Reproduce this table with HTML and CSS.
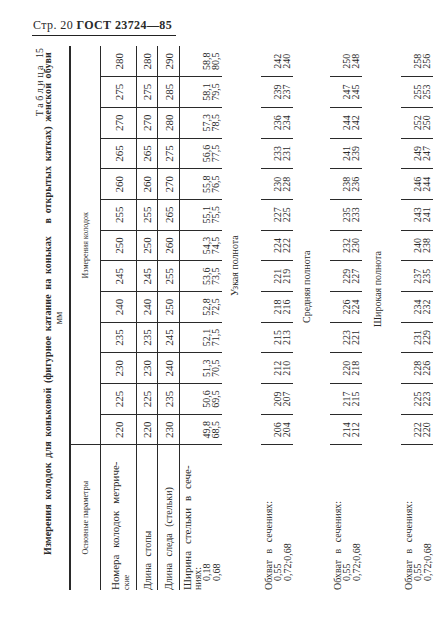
FILE: index.html
```html
<!DOCTYPE html>
<html lang="ru">
<head>
<meta charset="utf-8">
<title>ГОСТ 23724—85, стр. 20</title>
<link rel="stylesheet" href="styles.css">
</head>
<body>
<header class="runhead"><span class="runhead-text">Стр. 20 <b class="doc">ГОСТ 23724—85</b></span></header>
<main class="frame">
  <section class="sheet">
    <div class="tnum">Т а б л и ц а&nbsp;&nbsp;&nbsp;15</div>
    <div class="title">Измерения колодок для коньковой (фигурное катание на коньках <span class="gap"></span>в открытых катках) женской обуви</div>
    <div class="unit">мм</div>
    <table class="grid">
      <colgroup><col class="c-param"><col><col><col><col><col><col><col><col><col><col><col><col><col></colgroup>
      <thead>
        <tr class="hd"><th class="p">Основные параметры</th><th colspan="13">Измерения колодок</th></tr>
      </thead>
      <tbody>
        <tr class="r1"><td class="p"><span class="big">Номера колодок метриче-</span><br><span class="small">ские</span></td><td>220</td><td>225</td><td>230</td><td>235</td><td>240</td><td>245</td><td>250</td><td>255</td><td>260</td><td>265</td><td>270</td><td>275</td><td>280</td></tr>
        <tr class="r2"><td class="p">Длина стопы</td><td>220</td><td>225</td><td>230</td><td>235</td><td>240</td><td>245</td><td>250</td><td>255</td><td>260</td><td>265</td><td>270</td><td>275</td><td>280</td></tr>
        <tr class="r3"><td class="p">Длина следа (стельки)</td><td>230</td><td>235</td><td>240</td><td>245</td><td>250</td><td>255</td><td>260</td><td>265</td><td>270</td><td>275</td><td>280</td><td>285</td><td>290</td></tr>
        <tr class="r4"><td class="p"><span class="big">Ширина стельки в сече-</span><br>ниях:<br><span class="ind">0,18</span><br><span class="ind">0,68</span></td><td>49,8<br>68,5</td><td>50,6<br>69,5</td><td>51,3<br>70,5</td><td>52,1<br>71,5</td><td>52,8<br>72,5</td><td>53,6<br>73,5</td><td>54,3<br>74,5</td><td>55,1<br>75,5</td><td>55,8<br>76,5</td><td>56,6<br>77,5</td><td>57,3<br>78,5</td><td>58,1<br>79,5</td><td>58,8<br>80,5</td></tr>
        <tr class="sub s1"><td class="p"></td><td colspan="13">Узкая полнота</td></tr>
        <tr class="grp"><td class="p">Обхват в сечениях:<br><span class="ind">0,55</span><br><span class="ind">0,72;0,68</span></td><td>206<br>204</td><td>209<br>207</td><td>212<br>210</td><td>215<br>213</td><td>218<br>216</td><td>221<br>219</td><td>224<br>222</td><td>227<br>225</td><td>230<br>228</td><td>233<br>231</td><td>236<br>234</td><td>239<br>237</td><td>242<br>240</td></tr>
        <tr class="sub s2"><td class="p"></td><td colspan="13">Средняя полнота</td></tr>
        <tr class="grp"><td class="p">Обхват в сечениях:<br><span class="ind">0,55</span><br><span class="ind">0,72;0,68</span></td><td>214<br>212</td><td>217<br>215</td><td>220<br>218</td><td>223<br>221</td><td>226<br>224</td><td>229<br>227</td><td>232<br>230</td><td>235<br>233</td><td>238<br>236</td><td>241<br>239</td><td>244<br>242</td><td>247<br>245</td><td>250<br>248</td></tr>
        <tr class="sub s3"><td class="p"></td><td colspan="13">Широкая полнота</td></tr>
        <tr class="grp"><td class="p">Обхват в сечениях:<br><span class="ind">0,55</span><br><span class="ind">0,72;0,68</span></td><td>222<br>220</td><td>225<br>223</td><td>228<br>226</td><td>231<br>229</td><td>234<br>232</td><td>237<br>235</td><td>240<br>238</td><td>243<br>241</td><td>246<br>244</td><td>249<br>247</td><td>252<br>250</td><td>255<br>253</td><td>258<br>256</td></tr>
      </tbody>
    </table>
  </section>
</main>
</body>
</html>
```

FILE: styles.css
```css
html, body {
  margin: 0;
  padding: 0;
  background: #fff;
}
body {
  width: 440px;
  height: 623px;
  overflow: hidden;
  font-family: "Liberation Serif", "DejaVu Serif", serif;
  color: #2a2a2a;
}
.runhead {
  height: 35px;
  box-sizing: border-box;
  padding: 15px 0 0 32px;
}
.runhead-text {
  display: inline-block;
  font-size: 12px;
  line-height: 12px;
  letter-spacing: 0.4px;
  padding: 0 4px 4px 1px;
  border-bottom: 1.5px solid #222;
}
.doc {
  font-weight: bold;
}
.frame {
  display: block;
  width: 440px;
  height: 588px;
  overflow: hidden;
}
.sheet {
  display: block;
  width: 588px;
  height: 440px;
  box-sizing: border-box;
  padding: 36px 11px 0 33px;
  transform-origin: 0 0;
  transform: translateY(588px) rotate(-90deg);
}
.tnum {
  font-size: 10px;
  line-height: 8px;
  text-align: right;
  padding-right: 2px;
}
.title {
  font-size: 10px;
  line-height: 8px;
  font-weight: bold;
  letter-spacing: 0.1px;
  word-spacing: 2px;
  padding-left: 35px;
  white-space: nowrap;
}
.gap {
  display: inline-block;
  width: 8px;
}
.unit {
  font-size: 10px;
  line-height: 9px;
  text-align: center;
  margin-top: 2px;
  height: 15px;
}
.grid {
  border-collapse: collapse;
  table-layout: fixed;
  width: 544px;
}
.c-param {
  width: 145px;
}
.grid th, .grid td {
  padding: 0;
  text-align: center;
  font-weight: normal;
  border-color: #2a2a2a;
}
.hd th {
  border-top: 2px solid #2a2a2a;
  border-bottom: 1px solid #2a2a2a;
  height: 29px;
  font-size: 8px;
  line-height: 9px;
}
.hd th.p {
  border-right: 1px solid #2a2a2a;
}
.grid td.p {
  text-align: left;
  font-size: 10px;
  line-height: 9px;
  word-spacing: 4px;
}
.big {
  font-size: 11px;
}
.small {
  font-size: 8px;
}
.ind {
  padding-left: 9px;
}
.r1 td, .r2 td, .r3 td {
  border-bottom: 1px solid #2a2a2a;
  font-size: 11px;
}
.r1 td:not(.p), .r2 td:not(.p), .r3 td:not(.p), .r4 td:not(.p), .grp td:not(.p) {
  border-left: 1px solid #2a2a2a;
}
.r1 td { height: 31px; }
.r1 td.p { line-height: 10px; padding-top: 4px; }
.r2 td { height: 20px; }
.r3 td { height: 21px; }
.r4 td {
  height: 40px;
  vertical-align: bottom;
  font-size: 10px;
  line-height: 8.5px;
  padding-bottom: 2px;
}
.r4 td.p { line-height: 9.5px; padding-bottom: 1px; }
.sub td {
  font-size: 10px;
  line-height: 10px;
  vertical-align: top;
  text-align: left;
}
.s1 td { height: 31px; padding-top: 8px; }
.s1 td + td { padding-left: 149px; }
.s2 td { height: 28px; padding-top: 9px; }
.s2 td + td { padding-left: 122px; }
.s3 td { height: 28px; padding-top: 11px; }
.s3 td + td { padding-left: 118px; }
.sub td.p { padding-left: 0; }
.grp td {
  height: 30px;
  vertical-align: bottom;
  font-size: 10px;
  line-height: 8.5px;
  padding-bottom: 2px;
}
.grp td.p {
  line-height: 9.5px;
  padding-bottom: 1px;
}
```
